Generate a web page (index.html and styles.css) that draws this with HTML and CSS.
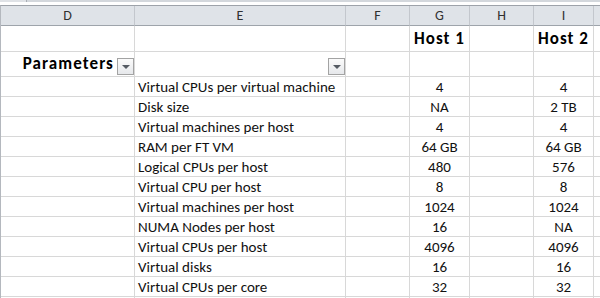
FILE: index.html
```html
<!DOCTYPE html>
<html>
<head>
<meta charset="utf-8">
<link rel="stylesheet" href="styles.css">
</head>
<body>
<div class="sheet">
  <div class="topstrip"><div class="tab"></div><div class="rest"></div></div>
  <div class="gap"></div>
  <div class="grid">
    <div class="ch">D</div><div class="ch">E</div><div class="ch">F</div><div class="ch">G</div><div class="ch">H</div><div class="ch">I</div><div class="ch last"></div>

    <div class="c r1"></div><div class="c r1"></div><div class="c r1"></div><div class="c r1 host">Host 1</div><div class="c r1"></div><div class="c r1 host">Host 2</div><div class="c r1"></div>

    <div class="c r2 filt"><span class="ptitle">Parameters</span><span class="dd"><span class="tri"></span></span></div>
    <div class="c r2 filt"><span class="dd"><span class="tri"></span></span></div>
    <div class="c r2"></div><div class="c r2"></div><div class="c r2"></div><div class="c r2"></div><div class="c r2"></div>

    <div class="c"></div><div class="c txt">Virtual CPUs per virtual machine</div><div class="c"></div><div class="c num">4</div><div class="c"></div><div class="c num">4</div><div class="c"></div>
    <div class="c"></div><div class="c txt">Disk size</div><div class="c"></div><div class="c num">NA</div><div class="c"></div><div class="c num">2 TB</div><div class="c"></div>
    <div class="c"></div><div class="c txt">Virtual machines per host</div><div class="c"></div><div class="c num">4</div><div class="c"></div><div class="c num">4</div><div class="c"></div>
    <div class="c"></div><div class="c txt">RAM per FT VM</div><div class="c"></div><div class="c num">64 GB</div><div class="c"></div><div class="c num">64 GB</div><div class="c"></div>
    <div class="c"></div><div class="c txt">Logical CPUs per host</div><div class="c"></div><div class="c num">480</div><div class="c"></div><div class="c num">576</div><div class="c"></div>
    <div class="c"></div><div class="c txt">Virtual CPU per host</div><div class="c"></div><div class="c num">8</div><div class="c"></div><div class="c num">8</div><div class="c"></div>
    <div class="c"></div><div class="c txt">Virtual machines per host</div><div class="c"></div><div class="c num">1024</div><div class="c"></div><div class="c num">1024</div><div class="c"></div>
    <div class="c"></div><div class="c txt">NUMA Nodes per host</div><div class="c"></div><div class="c num">16</div><div class="c"></div><div class="c num">NA</div><div class="c"></div>
    <div class="c"></div><div class="c txt">Virtual CPUs per host</div><div class="c"></div><div class="c num">4096</div><div class="c"></div><div class="c num">4096</div><div class="c"></div>
    <div class="c"></div><div class="c txt">Virtual disks</div><div class="c"></div><div class="c num">16</div><div class="c"></div><div class="c num">16</div><div class="c"></div>
    <div class="c"></div><div class="c txt">Virtual CPUs per core</div><div class="c"></div><div class="c num">32</div><div class="c"></div><div class="c num">32</div><div class="c"></div>
    <div class="c"></div><div class="c"></div><div class="c"></div><div class="c"></div><div class="c"></div><div class="c"></div><div class="c"></div>
  </div>
</div>
</body>
</html>
```
FILE: styles.css
```css
html, body {
  margin: 0;
  padding: 0;
  background: #ffffff;
  overflow: hidden;
}
.sheet {
  width: 600px;
  height: 298px;
  overflow: hidden;
  font-family: "Carlito", "Lato", "Liberation Sans", sans-serif;
  color: #000;
}
.topstrip {
  display: flex;
  height: 2px;
}
.topstrip .tab {
  width: 26px;
  background: #dfe2e6;
  border-right: 1px solid #a9aeb5;
}
.topstrip .rest {
  flex: 1;
  background: #d3d7dc;
}
.gap {
  height: 3px;
  background: #ffffff;
}
.grid {
  display: grid;
  grid-template-columns: 134px 211px 64px 60px 64px 60px 40px;
  grid-template-rows: 20px 26px 25px repeat(12, 20px);
  border-top: 1px solid #9da2a9;
  border-left: 1px solid #b4b8be;
}
.ch {
  background: #dfe3e8;
  border-right: 1px solid #c3c7cd;
  border-bottom: 1px solid #9ea4ab;
  display: flex;
  align-items: center;
  justify-content: center;
  font-size: 14px;
  color: #303030;
  padding-bottom: 1px;
  box-sizing: border-box;
}
.c {
  border-right: 1px solid #d8d8d8;
  border-bottom: 1px solid #d8d8d8;
  box-sizing: border-box;
  display: flex;
  align-items: flex-end;
  font-size: 15px;
  line-height: 18px;
  padding-bottom: 0px;
  white-space: nowrap;
  overflow: hidden;
  color: #111;
}
.txt {
  padding-left: 3px;
}
.num {
  justify-content: center;
}
.host {
  justify-content: center;
  font-weight: bold;
  font-size: 17px;
  letter-spacing: 1px;
  line-height: 20px;
  padding-bottom: 2px;
  color: #000;
}
.filt {
  justify-content: flex-end;
  padding-bottom: 1px;
  gap: 3px;
}
.ptitle {
  font-weight: bold;
  font-size: 17px;
  letter-spacing: 1.1px;
  line-height: 20px;
  padding-bottom: 1px;
  color: #000;
}
.dd {
  width: 17px;
  height: 17px;
  box-sizing: border-box;
  border: 1px solid #a3a3a3;
  background: linear-gradient(#fbfbfb, #e6e8eb);
  display: flex;
  align-items: center;
  justify-content: center;
}
.tri {
  width: 0;
  height: 0;
  border-left: 4px solid transparent;
  border-right: 4px solid transparent;
  border-top: 4px solid #555b63;
  margin-top: 1px;
}
```
